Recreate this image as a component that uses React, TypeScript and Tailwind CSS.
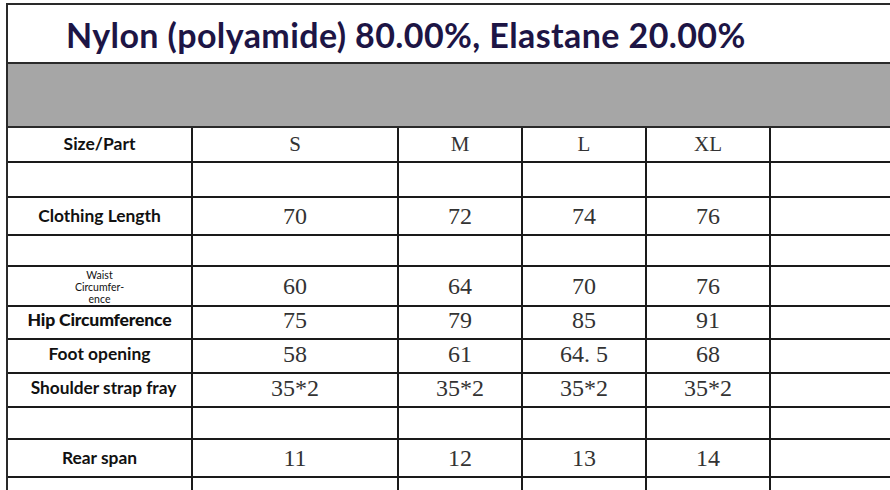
const rows: { label: React.ReactNode; values: string[]; h: string }[] = [
  { label: <span className="text-[17.5px] font-bold">Size/Part</span>, values: ["S", "M", "L", "XL"], h: "h-[35px]" },
  { label: null, values: [], h: "h-[35px]" },
  { label: <span className="text-[17.4px] font-bold">Clothing Length</span>, values: ["70", "72", "74", "76"], h: "h-[34px]" },
  { label: null, values: [], h: "h-[35px]" },
  {
    label: (
      <span className="block text-[10.5px] leading-[12px] font-normal pt-[2px]">
        Waist
        <br />
        Circumfer-
        <br />
        ence
      </span>
    ),
    values: ["60", "64", "70", "76"],
    h: "h-[35px]",
  },
  { label: <span className="text-[17.6px] font-black tracking-[-0.2px]">Hip Circumference</span>, values: ["75", "79", "85", "91"], h: "h-[34px]" },
  { label: <span className="text-[17.4px] font-bold">Foot opening</span>, values: ["58", "61", "64. 5", "68"], h: "h-[34px]" },
  { label: <span className="text-[17.3px] font-bold pl-[8px]">Shoulder strap fray</span>, values: ["35*2", "35*2", "35*2", "35*2"], h: "h-[35px]" },
  { label: null, values: [], h: "h-[35px]" },
  { label: <span className="text-[17.4px] font-bold">Rear span</span>, values: ["11", "12", "13", "14"], h: "h-[34px]" },
  { label: null, values: [], h: "h-[35px]" },
];

const cols = "grid grid-cols-[185px_206px_124px_124px_124px_1fr]";

export default function App() {
  return (
    <div className="w-[890px] h-[490px] overflow-hidden bg-white pt-[3px] pl-[6px]">
      <div className="w-[900px] border-l-2 border-t-2 border-[#2a2a2a]">
        <div className="h-[59px] border-b-2 border-[#2a2a2a] flex items-center pl-[58px] pt-[2px]">
          <span
            className="text-[34px] font-bold text-[#1d1545] tracking-[0.4px]"
            style={{ fontFamily: "Lato, 'Liberation Sans', sans-serif" }}
          >
            Nylon (polyamide) 80.00%, Elastane 20.00%
          </span>
        </div>
        <div className="h-[64px] bg-[#a6a6a6] border-b-2 border-[#2a2a2a]" />
        {rows.map((r, i) => (
          <div key={i} className={`${cols} ${r.h}`}>
            <div
              className="border-r-2 border-b-2 border-[#1a1a1a] flex items-center justify-center text-center text-[#111]"
              style={{ fontFamily: "Lato, 'Liberation Sans', sans-serif" }}
            >
              {r.label}
            </div>
            {[0, 1, 2, 3].map((j) => (
              <div
                key={j}
                className={`border-r-2 border-b-2 border-[#1a1a1a] flex items-center justify-center text-[#333] ${
                  i === 0 ? "text-[21px]" : "text-[24px]"
                }`}
                style={{ fontFamily: "'Liberation Serif', serif" }}
              >
                {r.values[j] ?? ""}
              </div>
            ))}
            <div className="border-b-2 border-[#1a1a1a]" />
          </div>
        ))}
      </div>
    </div>
  );
}
